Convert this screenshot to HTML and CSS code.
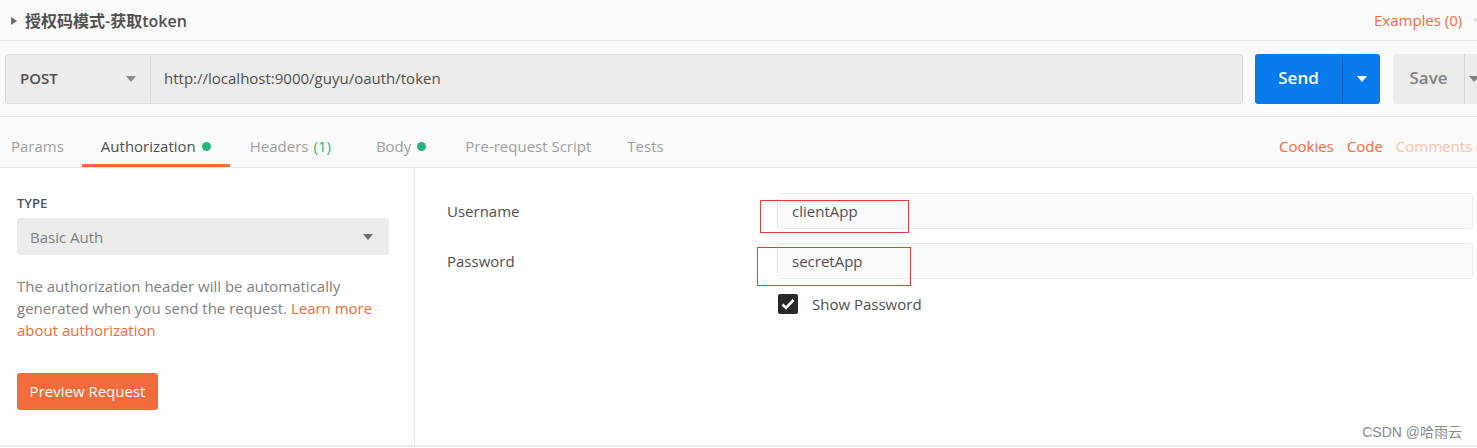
FILE: index.html
```html
<!DOCTYPE html>
<html>
<head>
<meta charset="utf-8">
<link rel="stylesheet" href="styles.css">
</head>
<body>
<div class="app">
  <div class="titlebar">
    <div class="title">
      <svg class="tri" width="8" height="10" viewBox="0 0 8 10"><path d="M1 1 L7 5 L1 9 Z" fill="#6b6b6b"/></svg>
      <span>授权码模式-获取token</span>
    </div>
    <div class="examples">Examples (0) <svg width="8" height="6" viewBox="0 0 8 6"><path d="M1 1 L7 1 L4 5 Z" fill="#f26b3a"/></svg></div>
  </div>

  <div class="reqrow">
    <div class="urlbox">
      <div class="method">
        <span>POST</span>
        <svg width="10" height="6" viewBox="0 0 10 6"><path d="M0 0 L10 0 L5 6 Z" fill="#8a8a8a"/></svg>
      </div>
      <div class="url">http://localhost:9000/guyu/oauth/token</div>
    </div>
    <div class="send">
      <span class="send-label">Send</span>
      <span class="send-caret"><svg width="10" height="6" viewBox="0 0 10 6"><path d="M0 0 L10 0 L5 6 Z" fill="#ffffff"/></svg></span>
    </div>
    <div class="save">
      <span class="save-label">Save</span>
      <span class="save-caret"><svg width="10" height="6" viewBox="0 0 10 6"><path d="M0 0 L10 0 L5 6 Z" fill="#808080"/></svg></span>
    </div>
  </div>

  <div class="tabs">
    <div class="tablist">
      <div class="tab first">Params</div>
      <div class="tab active">Authorization <i class="dot"></i></div>
      <div class="tab headers">Headers <span class="count">(1)</span></div>
      <div class="tab body">Body <i class="dot"></i></div>
      <div class="tab">Pre-request Script</div>
      <div class="tab">Tests</div>
    </div>
    <div class="tablinks">
      <span class="lnk">Cookies</span>
      <span class="lnk">Code</span>
      <span class="lnk faded">Comments (0)</span>
    </div>
  </div>

  <div class="content">
    <div class="left">
      <div class="type">TYPE</div>
      <div class="select">
        <span>Basic Auth</span>
        <svg width="10" height="6" viewBox="0 0 10 6"><path d="M0 0 L10 0 L5 6 Z" fill="#707070"/></svg>
      </div>
      <p class="desc">The authorization header will be automatically generated when you send the request. <span class="orange">Learn more about authorization</span></p>
      <div class="preview">Preview Request</div>
    </div>
    <div class="right">
      <div class="fields">
        <div class="label">Username</div>
        <div class="input">clientApp</div>
        <div class="label">Password</div>
        <div class="input">secretApp</div>
        <div></div>
        <div class="check">
          <span class="box"><svg width="14" height="12" viewBox="0 0 14 12"><path d="M1.5 6.5 L5 10 L12.5 2" fill="none" stroke="#fff" stroke-width="2.6"/></svg></span>
          <span>Show Password</span>
        </div>
      </div>
      <div class="mark mark1"></div>
      <div class="mark mark2"></div>
    </div>
  </div>
  <div class="watermark">CSDN @哈雨云</div>
</div>
</body>
</html>
```

FILE: styles.css
```css
* { box-sizing: border-box; }
html, body { margin: 0; padding: 0; }
body {
  width: 1477px;
  height: 448px;
  overflow: hidden;
  background: #ffffff;
  font-family: "Open Sans", "Noto Sans CJK SC", sans-serif;
  color: #505050;
}
.app { position: relative; width: 1477px; height: 448px; overflow: hidden; }

.titlebar {
  height: 41px;
  background: #fafafa;
  border-bottom: 1px solid #e8e8e8;
  display: flex;
  align-items: center;
  padding: 0 0 0 10px;
  white-space: nowrap;
}
.title { flex: 1; display: flex; align-items: center; gap: 7px; font-size: 16px; color: #505050; font-weight: 600; }
.title .tri { margin-top: 1px; }
.examples { flex-shrink: 0; width: 103px; font-size: 15px; color: #f26b3a; display: flex; align-items: center; gap: 12px; }

.reqrow {
  height: 76px;
  background: #fafafa;
  border-bottom: 1px solid #e8e8e8;
  display: flex;
  align-items: center;
  padding: 0 0 0 5px;
  gap: 12px;
  overflow: hidden;
}
.urlbox {
  flex-shrink: 0;
  width: 1238px;
  height: 50px;
  display: flex;
  border: 1px solid #dcdcdc;
  border-radius: 3px;
  background: #ececec;
  overflow: hidden;
}
.method {
  width: 145px;
  background: #ececec;
  border-right: 1px solid #dcdcdc;
  display: flex;
  align-items: center;
  justify-content: space-between;
  padding: 0 14px 2px 14px;
  font-size: 15px;
  font-weight: 600;
  color: #505050;
}
.method svg { margin-top: 2px; }
.url {
  flex: 1;
  display: flex;
  align-items: center;
  padding: 0 0 2px 13px;
  font-size: 15px;
  color: #505050;
}
.send {
  flex-shrink: 0;
  width: 125px;
  height: 50px;
  background: #097bed;
  border-radius: 3px;
  display: flex;
  color: #fff;
  font-size: 17px;
  font-weight: 600;
}
.send-label { width: 87px; display: flex; align-items: center; justify-content: center; padding-bottom: 2px; }
.send-caret { flex: 1; border-left: 1px solid #0a66c2; display: flex; align-items: center; justify-content: center; }
.save {
  width: 100px;
  height: 50px;
  background: #ececec;
  border-radius: 3px;
  display: flex;
  color: #808080;
  font-size: 17px;
  font-weight: 600;
  flex-shrink: 0;
  margin-left: 1px;
}
.save-label { width: 71px; display: flex; align-items: center; justify-content: center; padding-bottom: 2px; }
.save-caret { flex: 1; border-left: 1px solid #d6d6d6; display: flex; align-items: center; justify-content: flex-start; padding-left: 4px; }

.tabs {
  height: 51px;
  background: #fafafa;
  border-bottom: 1px solid #e8e8e8;
  display: flex;
  align-items: stretch;
  overflow: hidden;
  white-space: nowrap;
}
.tablist { flex: 1; display: flex; padding-left: 11px; }
.tab {
  font-size: 15px;
  color: #a0a0a0;
  display: flex;
  align-items: center;
  padding: 8px 18px 0 18px;
}
.tab.first { padding-left: 0; }
.tab.headers { padding-left: 20px; padding-right: 27px; }
.tab.body { padding-right: 21px; }
.tab.active {
  color: #505050;
  padding: 11px 19px 0 19px;
  border-bottom: 3px solid #f26b3a;
}
.tab .dot { display: inline-block; width: 9px; height: 9px; border-radius: 50%; background: #26b47f; margin-left: 6px; margin-top: 1px; }
.tab .count { color: #26b47f; margin-left: 5px; }
.tablinks { flex-shrink: 0; width: 198px; display: flex; align-items: center; padding-top: 8px; gap: 13px; font-size: 15px; }
.lnk { color: #f26b3a; flex-shrink: 0; }
.lnk.faded { color: #f9c2ad; }

.content { display: flex; height: 279px; border-bottom: 2px solid #ececec; }
.left {
  width: 415px;
  flex-shrink: 0;
  border-right: 1px solid #e8e8e8;
  padding: 25px 25px 0 17px;
}
.type { font-size: 13px; font-weight: 600; color: #505050; line-height: 20px; }
.select {
  margin-top: 5px;
  height: 37px;
  background: #ececec;
  border-radius: 3px;
  display: flex;
  align-items: center;
  justify-content: space-between;
  padding: 0 16px 0 13px;
  font-size: 15px;
  color: #808080;
}
.desc {
  margin: 20px 0 0 0;
  font-size: 15px;
  line-height: 22px;
  color: #808080;
}
.orange { color: #f26b3a; }
.preview {
  margin-top: 32px;
  width: 141px;
  height: 37px;
  background: #f26b3a;
  border-radius: 3px;
  color: #fff;
  font-size: 15px;
  display: flex;
  align-items: center;
  justify-content: center;
  padding-bottom: 1px;
}

.right { flex: 1; position: relative; padding: 25px 4px 0 32px; }
.fields {
  display: grid;
  grid-template-columns: 330px 1fr;
  row-gap: 14px;
  align-items: center;
}
.label { font-size: 15px; color: #505050; }
.input {
  height: 36px;
  background: #fafafa;
  border: 1px solid #ececec;
  border-radius: 3px;
  display: flex;
  align-items: center;
  padding-left: 14px;
  font-size: 15px;
  color: #505050;
}
.check { display: flex; align-items: center; gap: 14px; font-size: 15px; color: #505050; margin-top: 1px; padding-left: 1px; }
.check .box {
  width: 20px; height: 20px; background: #282828; border-radius: 2px;
  display: flex; align-items: center; justify-content: center;
}
.mark { position: absolute; border: 1px solid #e83b3b; }
.mark1 { left: 345px; top: 32px; width: 149px; height: 33px; }
.mark2 { left: 342px; top: 79px; width: 154px; height: 39px; }

.watermark {
  position: absolute;
  right: 15px;
  bottom: 7px;
  font-family: "Liberation Sans", "Noto Sans CJK SC", sans-serif;
  font-size: 14px;
  color: #8a8a8a;
}
```
